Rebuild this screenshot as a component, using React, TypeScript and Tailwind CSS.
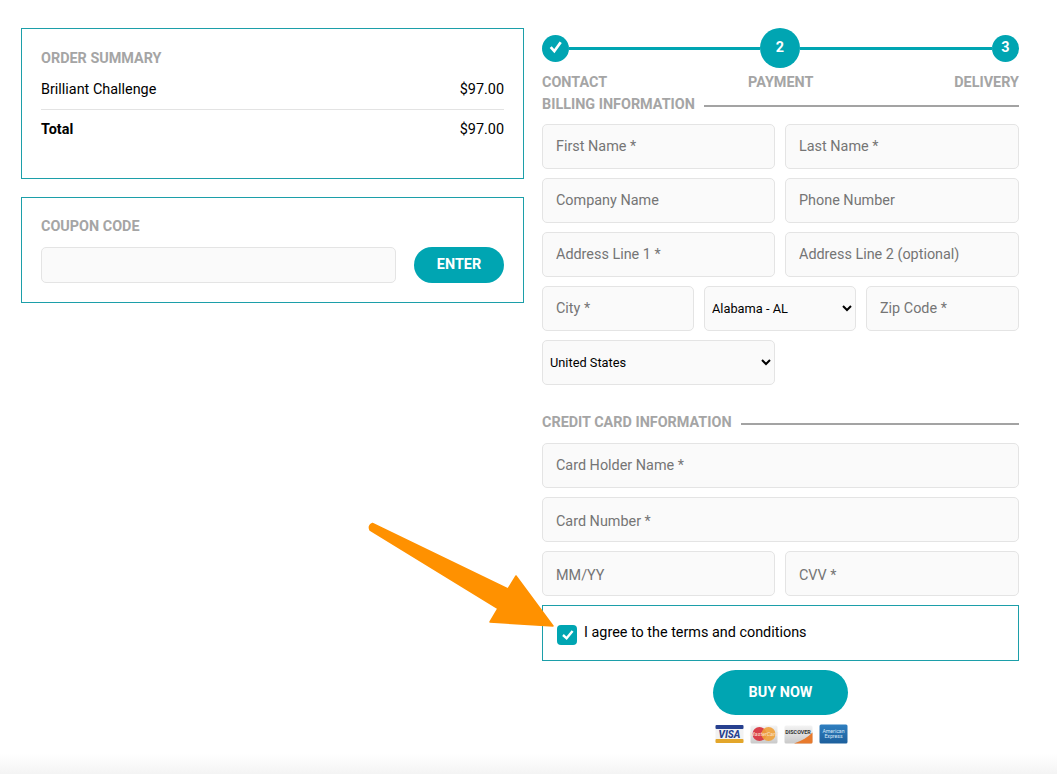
const field = "h-[45px] min-w-0 rounded-[5px] border border-[#e4e4e4] bg-[#fafafa] px-[13px] text-[14.4px] text-[#333] placeholder:text-[#757575] outline-none"
const select = "h-[45px] min-w-0 rounded-[5px] border border-[#e4e4e4] bg-[#fafafa] pl-[3px] text-[12.8px] text-black outline-none"
const heading = "text-[14.4px] font-bold leading-[18px] text-[#a5a5a5]"

function Circle({ big, children }: { big?: boolean; children: React.ReactNode }) {
  return (
    <div className={`flex shrink-0 items-center justify-center rounded-full bg-[#00a5b2] text-[14.4px] font-bold text-white ${big ? "h-10 w-10" : "h-[27px] w-[27px]"}`}>
      {children}
    </div>
  )
}

function SectionTitle({ label }: { label: string }) {
  return (
    <div className="flex items-center gap-[9px]">
      <span className={heading}>{label}</span>
      <div className="mt-[1px] h-[2px] flex-1 bg-[#a3a3a3]" />
    </div>
  )
}

function CardLogos() {
  return (
    <svg width="134" height="22" viewBox="0 0 134 22" className="block">
      <defs>
        <linearGradient id="mc" x1="0" y1="0" x2="0" y2="1">
          <stop offset="0" stopColor="#f4f4f4" />
          <stop offset="1" stopColor="#c9c9c9" />
        </linearGradient>
        <linearGradient id="amex" x1="0" y1="0" x2="0" y2="1">
          <stop offset="0" stopColor="#2f7fc0" />
          <stop offset="1" stopColor="#1c5f9c" />
        </linearGradient>
      </defs>
      <rect x="1.5" y="2" width="28" height="18" rx="1.5" fill="#f2f2f2" />
      <rect x="1.5" y="2" width="28" height="4" rx="1" fill="#27408f" />
      <rect x="1.5" y="16" width="28" height="4" rx="1" fill="#e3a62a" />
      <text x="15.5" y="14.5" textAnchor="middle" fontSize="10" fontWeight="800" fontStyle="italic" fill="#27408f" fontFamily="Roboto, sans-serif">VISA</text>
      <rect x="36.5" y="2.5" width="27" height="18" rx="1.5" fill="url(#mc)" />
      <circle cx="45.5" cy="11" r="7" fill="#d9404a" />
      <circle cx="54.5" cy="11" r="7" fill="#f0a13a" opacity="0.9" />
      <text x="50" y="13" textAnchor="middle" fontSize="5.5" fontStyle="italic" fill="#fbe3d0" fontFamily="Roboto, sans-serif">MasterCard</text>
      <rect x="70.5" y="2.5" width="28" height="18" rx="1.5" fill="url(#mc)" />
      <path d="M98.5 9.5 V19 a1.5 1.5 0 0 1 -1.5 1.5 H80 C88 18 94 14 98.5 9.5Z" fill="#e87a2d" />
      <text x="84" y="10.5" textAnchor="middle" fontSize="5.4" fontWeight="700" fill="#333" fontFamily="Roboto, sans-serif">DISCOVER</text>
      <rect x="105.5" y="1.5" width="28" height="19" rx="1.5" fill="url(#amex)" />
      <text x="119.5" y="9.5" textAnchor="middle" fontSize="5.2" fill="#d6e8f7" fontFamily="Roboto, sans-serif">American</text>
      <text x="119.5" y="15" textAnchor="middle" fontSize="5.2" fill="#d6e8f7" fontFamily="Roboto, sans-serif">Express</text>
    </svg>
  )
}

export default function App() {
  return (
    <div className="relative flex h-[774px] w-[1057px] flex-col overflow-hidden bg-white font-['Roboto',sans-serif]">
      <div className="flex flex-1 items-start gap-[18px] pl-[21px] pt-[28px]">
        <div className="flex w-[503px] flex-col gap-[18px]">
          <div className="h-[151px] border border-[#1c9fa9] px-[19px] pt-[21px]">
            <div className={heading}>ORDER SUMMARY</div>
            <div className="mt-[12px] flex justify-between border-b border-[#e3e3e3] pb-[9px] text-[14.4px] leading-[20px] text-black">
              <span>Brilliant Challenge</span>
              <span>$97.00</span>
            </div>
            <div className="mt-[10px] flex justify-between text-[14.4px] leading-[20px] text-black">
              <span className="font-bold">Total</span>
              <span>$97.00</span>
            </div>
          </div>
          <div className="h-[106px] border border-[#1c9fa9] px-[19px] pt-[20px]">
            <div className={heading}>COUPON CODE</div>
            <div className="mt-[11px] flex items-center gap-[18px]">
              <input className="h-[36px] flex-1 rounded-[5px] border border-[#e4e4e4] bg-[#fafafa] outline-none" />
              <button className="h-[36px] w-[90px] rounded-full bg-[#00a5b2] text-[14.4px] font-bold text-white">ENTER</button>
            </div>
          </div>
        </div>

        <div className="flex w-[477px] flex-col">
          <div className="flex items-center">
            <Circle>
              <svg width="27" height="27" viewBox="0 0 27 27"><path d="M8.7 12.2 L12.3 16.2 L18.7 7.2" fill="none" stroke="white" strokeWidth="2.7" /></svg>
            </Circle>
            <div className="h-[3px] w-[191px] bg-[#00a5b2]" />
            <Circle big>2</Circle>
            <div className="h-[3px] flex-1 bg-[#00a5b2]" />
            <Circle>3</Circle>
          </div>
          <div className={`mt-[6px] flex justify-between ${heading}`}>
            <span>CONTACT</span>
            <span>PAYMENT</span>
            <span>DELIVERY</span>
          </div>
          <div className="mt-[4px]">
            <SectionTitle label="BILLING INFORMATION" />
          </div>
          <div className="mt-[10px] flex flex-col gap-[9px]">
            <div className="grid grid-cols-[233px_1fr] gap-[10px]">
              <input className={field} placeholder="First Name *" />
              <input className={field} placeholder="Last Name *" />
            </div>
            <div className="grid grid-cols-[233px_1fr] gap-[10px]">
              <input className={field} placeholder="Company Name" />
              <input className={field} placeholder="Phone Number" />
            </div>
            <div className="grid grid-cols-[233px_1fr] gap-[10px]">
              <input className={field} placeholder="Address Line 1 *" />
              <input className={field} placeholder="Address Line 2 (optional)" />
            </div>
            <div className="grid grid-cols-[152px_152px_1fr] gap-[10px]">
              <input className={field} placeholder="City *" />
              <select className={select}><option>Alabama - AL</option></select>
              <input className={field} placeholder="Zip Code *" />
            </div>
            <div className="grid grid-cols-[233px_1fr] gap-[10px]">
              <select className={select}><option>United States</option></select>
            </div>
          </div>
          <div className="mt-[29px]">
            <SectionTitle label="CREDIT CARD INFORMATION" />
          </div>
          <div className="mt-[11px] flex flex-col gap-[9px]">
            <input className={field} placeholder="Card Holder Name *" />
            <input className={`${field} pt-[3px]`} placeholder="Card Number *" />
            <div className="grid grid-cols-[233px_1fr] gap-[10px]">
              <input className={`${field} pt-[3px]`} placeholder="MM/YY" />
              <input className={`${field} pt-[3px]`} placeholder="CVV *" />
            </div>
          </div>
          <div className="mt-[9px] flex h-[56px] items-start gap-[7px] border border-[#1c9fa9] pl-[14px] pt-[19px]">
            <div className="flex h-5 w-5 items-center justify-center rounded-[4px] bg-[#00a5b2]">
              <svg width="20" height="20" viewBox="0 0 20 20"><path d="M6 10 L9.6 13.3 L15.6 6" fill="none" stroke="white" strokeWidth="2.4" /></svg>
            </div>
            <span className="text-[14.4px] leading-[16px] text-black">I agree to the terms and conditions</span>
          </div>
          <div className="mt-[9px] flex flex-col items-center">
            <button className="h-[45px] w-[135px] rounded-full bg-[#00a5b2] text-[14.4px] font-bold text-white">BUY NOW</button>
            <div className="mt-[8px]">
              <CardLogos />
            </div>
          </div>
        </div>
      </div>
      <div className="h-[20px] bg-gradient-to-b from-white to-[#f4f4f4]" />

      <svg className="pointer-events-none absolute left-0 top-0" width="1057" height="774" viewBox="0 0 1057 774">
        <path d="M372.5 523.5 L508 589 L516 576 L553 626 L490 622 L498 608.5 L370 530 Q368 525.5 372.5 523.5Z" fill="#ff9100" stroke="#ff9100" strokeWidth="1.5" strokeLinejoin="round" />
      </svg>
    </div>
  )
}
